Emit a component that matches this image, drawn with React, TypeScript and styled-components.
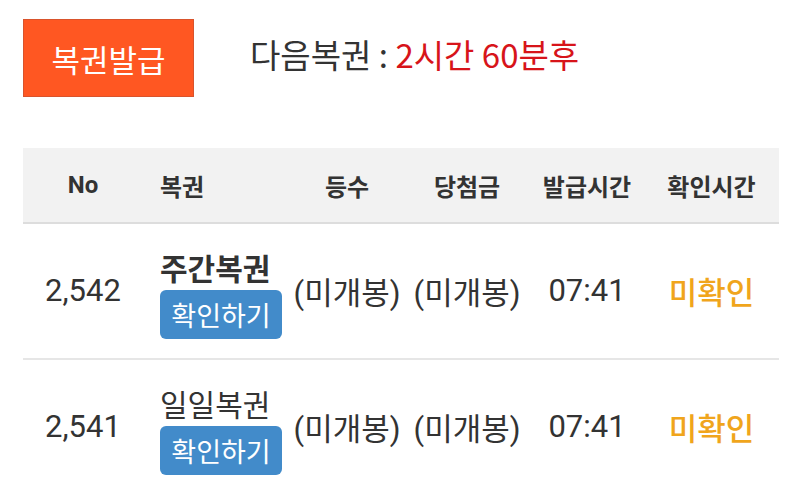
import React from 'react';
import styled, { createGlobalStyle } from 'styled-components';

const GlobalStyle = createGlobalStyle`
  html, body {
    margin: 0;
    padding: 0;
    background: #ffffff;
  }
  body {
    font-family: Roboto, "Noto Sans CJK KR", "Noto Sans", sans-serif;
    color: #333333;
  }
`;

const Page = styled.div`
  padding: 19px 21px 0 23px;
`;

const TopBar = styled.div`
  display: flex;
  align-items: center;
  gap: 56px;
`;

const IssueButton = styled.button`
  width: 171px;
  height: 78px;
  box-sizing: border-box;
  border: 1px solid #d9532c;
  background: #ff5722;
  color: #ffffff;
  font-family: "Noto Sans CJK KR", sans-serif;
  font-size: 31px;
  padding: 0;
  cursor: pointer;
`;

const NextInfo = styled.div`
  font-family: "Noto Sans CJK KR", sans-serif;
  font-size: 33px;
  color: #333333;
  margin-top: -8px;
`;

const Red = styled.span`
  color: #d7141a;
`;

const Table = styled.div`
  margin-top: 51px;
  width: 756px;
`;

const cols = '120px 147px 114px 126px 114px 135px';

const HeadRow = styled.div`
  display: grid;
  grid-template-columns: ${cols};
  height: 74px;
  align-items: center;
  background: #f2f2f2;
  border-bottom: 2px solid #dddddd;
`;

const HeadCell = styled.div<{ $left?: boolean }>`
  font-family: Roboto, "Noto Sans CJK KR", sans-serif;
  font-weight: 700;
  font-size: 24px;
  color: #333333;
  text-align: ${({ $left }) => ($left ? 'left' : 'center')};
  padding-left: ${({ $left }) => ($left ? '17px' : '0')};
`;

const Row = styled.div`
  display: grid;
  grid-template-columns: ${cols};
  align-items: center;
  padding: 25px 0 19px;
  border-bottom: 2px solid #e6e6e6;
`;

const Cell = styled.div<{ $color?: string; $weight?: number }>`
  text-align: center;
  font-size: 31px;
  padding-bottom: 8px;
  font-weight: ${({ $weight }) => $weight || 400};
  color: ${({ $color }) => $color || '#333333'};
`;

const NameCell = styled.div`
  display: flex;
  flex-direction: column;
  align-items: flex-start;
  gap: 5px;
  padding-left: 17px;
`;

const Name = styled.div<{ $bold?: boolean }>`
  font-family: "Noto Sans CJK KR", sans-serif;
  font-size: 30px;
  line-height: 36px;
  font-weight: ${({ $bold }) => ($bold ? 700 : 400)};
  color: #333333;
`;

const CheckButton = styled.button`
  width: 122px;
  height: 49px;
  border: none;
  border-radius: 6px;
  background: #428bca;
  color: #ffffff;
  font-family: "Noto Sans CJK KR", sans-serif;
  font-size: 27px;
  padding: 0;
  cursor: pointer;
`;

type Ticket = {
  no: string;
  name: string;
  bold: boolean;
  rank: string;
  prize: string;
  issued: string;
  checked: string;
};

const tickets: Ticket[] = [
  { no: '2,542', name: '주간복권', bold: true, rank: '(미개봉)', prize: '(미개봉)', issued: '07:41', checked: '미확인' },
  { no: '2,541', name: '일일복권', bold: false, rank: '(미개봉)', prize: '(미개봉)', issued: '07:41', checked: '미확인' },
];

const App: React.FC = () => {
  return (
    <>
      <GlobalStyle />
      <Page>
        <TopBar>
          <IssueButton>복권발급</IssueButton>
          <NextInfo>
            다음복권 : <Red>2시간 60분후</Red>
          </NextInfo>
        </TopBar>
        <Table>
          <HeadRow>
            <HeadCell>No</HeadCell>
            <HeadCell $left>복권</HeadCell>
            <HeadCell>등수</HeadCell>
            <HeadCell>당첨금</HeadCell>
            <HeadCell>발급시간</HeadCell>
            <HeadCell>확인시간</HeadCell>
          </HeadRow>
          {tickets.map((t) => (
            <Row key={t.no}>
              <Cell>{t.no}</Cell>
              <NameCell>
                <Name $bold={t.bold}>{t.name}</Name>
                <CheckButton>확인하기</CheckButton>
              </NameCell>
              <Cell>{t.rank}</Cell>
              <Cell>{t.prize}</Cell>
              <Cell>{t.issued}</Cell>
              <Cell $color="#f0a51c" $weight={500}>{t.checked}</Cell>
            </Row>
          ))}
        </Table>
      </Page>
    </>
  );
};

export default App;
